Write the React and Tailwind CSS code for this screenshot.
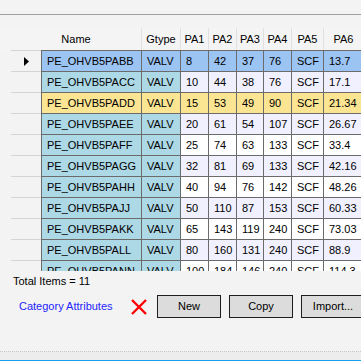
import React from 'react';

// Linhas da grade de válvulas
const rows = [
  ['PE_OHVB5PABB', 'VALV', '8', '42', '37', '76', 'SCF', '13.7'],
  ['PE_OHVB5PACC', 'VALV', '10', '44', '38', '76', 'SCF', '17.1'],
  ['PE_OHVB5PADD', 'VALV', '15', '53', '49', '90', 'SCF', '21.34'],
  ['PE_OHVB5PAEE', 'VALV', '20', '61', '54', '107', 'SCF', '26.67'],
  ['PE_OHVB5PAFF', 'VALV', '25', '74', '63', '133', 'SCF', '33.4'],
  ['PE_OHVB5PAGG', 'VALV', '32', '81', '69', '133', 'SCF', '42.16'],
  ['PE_OHVB5PAHH', 'VALV', '40', '94', '76', '142', 'SCF', '48.26'],
  ['PE_OHVB5PAJJ', 'VALV', '50', '110', '87', '153', 'SCF', '60.33'],
  ['PE_OHVB5PAKK', 'VALV', '65', '143', '119', '240', 'SCF', '73.03'],
  ['PE_OHVB5PALL', 'VALV', '80', '160', '131', '240', 'SCF', '88.9'],
  ['PE_OHVB5PANN', 'VALV', '100', '184', '146', '240', 'SCF', '114.3'],
];

const widths = ['w-[100px]', 'w-[39px]', 'w-[28px]', 'w-[28px]', 'w-[27px]', 'w-[28px]', 'w-[32px]', 'w-[40px]'];
const headers = ['Gtype', 'PA1', 'PA2', 'PA3', 'PA4', 'PA5', 'PA6'];

function cellBg(r, c) {
  if (r === 0) return 'bg-[#9cc4f3]';
  if (r === 2) return 'bg-[#fce592]';
  if (c < 2) return 'bg-[#add8e6]';
  return r % 2 === 1 ? 'bg-[#f0f0ff]' : 'bg-white';
}

function Botao({ children }) {
  return (
    <button className="w-[64px] h-[23px] shrink-0 border border-[#1e1e1e] bg-[#dcdcdc] text-black text-[11px] flex items-center justify-center">
      {children}
    </button>
  );
}

export default function App() {
  return (
    <div
      className="w-[361px] h-[361px] overflow-hidden bg-[#f3f3f3] flex flex-col text-[11px] text-black"
      style={{ fontFamily: '"Liberation Sans", Arial, sans-serif' }}
    >
      <div className="h-[14px] shrink-0" />
      <div className="h-px shrink-0 bg-[#a0a0a0]" />
      <div className="h-[13px] shrink-0" />

      {/* Cabeçalho */}
      <div className="flex h-[22px] shrink-0 pl-[11px] bg-[#f4f4f4]">
        <div className="w-[130px] shrink-0 flex items-center justify-center">Name</div>
        {headers.map((h, i) => (
          <div
            key={h}
            className={`${widths[i + 1]} shrink-0 border-l border-[#e0e0e0] flex items-center justify-center`}
          >
            {h}
          </div>
        ))}
      </div>

      {/* Linhas */}
      <div className="h-[221px] shrink-0 overflow-hidden">
        {rows.map((row, r) => (
          <div key={r} className="flex h-[21px]">
            <div className="w-[41px] shrink-0 flex">
              <div className="w-[11px]" />
              <div className="w-[30px] border-t border-[#d4d4d4] flex items-center justify-center">
                {r === 0 && (
                  <svg width="5" height="9" viewBox="0 0 5 9">
                    <path d="M0 0 L5 4.5 L0 9 Z" fill="#000" />
                  </svg>
                )}
              </div>
            </div>
            {row.map((v, c) => (
              <div
                key={c}
                className={`${widths[c]} shrink-0 border-l border-t border-[#6b6b6b] ${cellBg(r, c)} flex items-center pl-[5px] whitespace-nowrap overflow-hidden`}
              >
                {v}
              </div>
            ))}
          </div>
        ))}
      </div>

      {/* Rodapé */}
      <div className="h-[21px] shrink-0 flex items-center pl-[13px]">Total Items = 11</div>
      <div className="h-[3px] shrink-0" />
      <div className="h-[23px] shrink-0 flex items-center">
        <span className="ml-[19px] w-[112px] shrink-0 text-[#2323ff]">Category Attributes</span>
        <svg width="16" height="16" viewBox="0 0 16 16" className="shrink-0 mr-[10px]">
          <path d="M1 1 L15 15 M15 1 L1 15" stroke="#ff0000" strokeWidth="2.4" />
        </svg>
        <div className="flex gap-[8px]">
          <Botao>New</Botao>
          <Botao>Copy</Botao>
          <Botao>Import...</Botao>
        </div>
      </div>
      <div className="flex-1" />
      <div className="h-[9px] shrink-0 border-t border-dotted border-[#c8c8c8] bg-[#ededed]" />
      <div className="h-px shrink-0 bg-[#14a0ef]" />
    </div>
  );
}
